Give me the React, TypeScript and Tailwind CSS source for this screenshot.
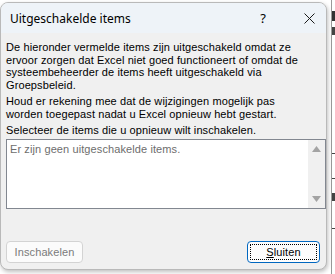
import React from "react";

export default function App() {
  const body = { fontFamily: '"Liberation Sans", Arial, sans-serif' };
  return (
    <div className="relative w-[335px] h-[274px] bg-white overflow-hidden">
      {/* background sheet hints */}
      <div className="absolute left-[331px] top-0 w-px h-[274px] bg-[#9a9a9a]" />
      <div className="absolute left-[332px] top-[11px] w-[3px] h-[10px] bg-[#333]" />
      <div className="absolute left-[332px] top-[27px] w-[3px] h-[8px] bg-[#444]" />
      <div className="absolute left-[332px] top-[153px] w-[3px] h-px bg-[#444]" />
      <div className="absolute left-[332px] top-[178px] w-[3px] h-px bg-[#444]" />
      <div className="absolute left-[332px] top-[193px] w-[3px] h-[8px] bg-[#444]" />
      <div className="absolute left-[332px] top-[228px] w-[3px] h-px bg-[#444]" />

      <div className="absolute left-0 top-[2px] w-[327px] h-[268px] rounded-[8px] border border-[#b9b9b9] bg-[#f0f0f0] overflow-hidden shadow-[1px_2px_4px_rgba(0,0,0,0.25)] flex flex-col">
        {/* title bar */}
        <div className="h-[30px] bg-[#eef3f8] flex items-center shrink-0 pt-[1px]">
          <span className="ml-[9px] text-[12px] text-black" style={{ fontFamily: '"Noto Sans", "Liberation Sans", sans-serif' }}>
            Uitgeschakelde items
          </span>
          <span className="ml-auto mr-[38px] text-[13px] text-black" style={{ fontFamily: '"Noto Sans", sans-serif' }}>?</span>
          <svg width="11" height="11" viewBox="0 0 11 11" className="mr-[11px]">
            <path d="M0.5 0.5 L10.5 10.5 M10.5 0.5 L0.5 10.5" stroke="#1a1a1a" strokeWidth="1" />
          </svg>
        </div>
        {/* body */}
        <div className="px-[5px] text-[11px] leading-[12.6px] tracking-[0.1px] text-black flex-1 flex flex-col" style={body}>
          <p className="mt-[8px] whitespace-nowrap">
            De hieronder vermelde items zijn uitgeschakeld omdat ze<br />
            ervoor zorgen dat Excel niet goed functioneert of omdat de<br />
            systeembeheerder de items heeft uitgeschakeld via<br />
            Groepsbeleid.
          </p>
          <p className="mt-[4px] whitespace-nowrap">
            Houd er rekening mee dat de wijzigingen mogelijk pas<br />
            worden toegepast nadat u Excel opnieuw hebt gestart.
          </p>
          <p className="mt-[3px] whitespace-nowrap">Selecteer de items die u opnieuw wilt inschakelen.</p>
          <div className="mt-[3px] w-[320px] h-[70px] border border-[#828790] bg-white flex">
            <div className="flex-1 pl-[3px] pt-[3px] text-[#6d6d6d]">Er zijn geen uitgeschakelde items.</div>
            <div className="w-[17px] bg-[#f0f0f0] flex flex-col items-center justify-between py-[6px]">
              <svg width="9" height="6" viewBox="0 0 9 6"><path d="M4.5 0 L9 6 L0 6 Z" fill="#a3a3a3" /></svg>
              <svg width="9" height="6" viewBox="0 0 9 6"><path d="M0 0 L9 0 L4.5 6 Z" fill="#a3a3a3" /></svg>
            </div>
          </div>
          <div className="mt-auto mb-[6px] flex items-center justify-between pr-[1px]">
            <button className="w-[77px] h-[22px] rounded-[4px] border border-[#d3d3d3] bg-[#fbfbfb] text-[#7a7a7a] text-[11px]" style={body}>
              Inschakelen
            </button>
            <button className="w-[73px] h-[22px] rounded-[4px] border border-[#0067c0] bg-[#fdfdfd] p-[2px]" style={body}>
              <div className="w-full h-full border border-dotted border-black flex items-center justify-center text-[11px] text-black">
                <span><span className="underline">S</span>luiten</span>
              </div>
            </button>
          </div>
        </div>
      </div>
    </div>
  );
}
